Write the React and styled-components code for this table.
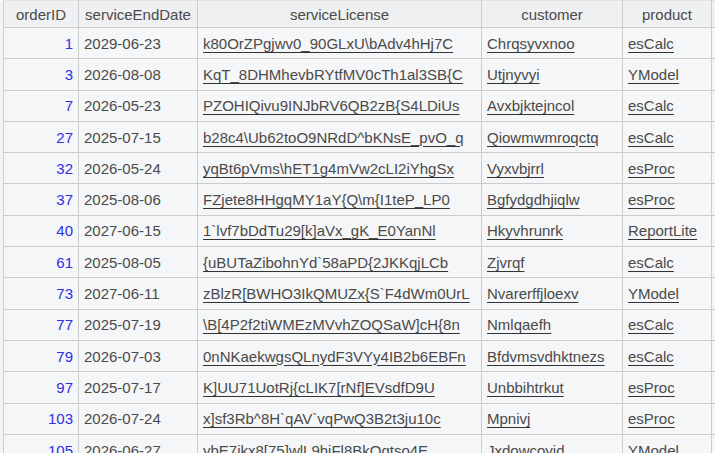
import React from 'react';
import styled, { createGlobalStyle } from 'styled-components';

const GlobalStyle = createGlobalStyle`
    html, body {
        margin: 0;
        padding: 0;
        background-color: #f3f4f5;
        overflow: hidden;
    }
`;

const Page = styled.div`
    width: 715px;
    height: 453px;
    padding-left: 3px;
    box-sizing: border-box;
    overflow: hidden;
    font-family: "Liberation Sans", Arial, sans-serif;
    font-size: 15px;
    color: #4a4a4a;
`;

const Table = styled.table`
    border-collapse: collapse;
    table-layout: fixed;
    width: 760px;
`;

const HeadCell = styled.th`
    height: 26px;
    padding: 0 5px;
    font-weight: normal;
    text-align: center;
    background-color: #eef0f1;
    border: 1px solid #c9cdd0;
    border-top: 1px solid #dfe2e4;
    white-space: nowrap;
    overflow: hidden;
`;

const Cell = styled.td`
    height: 30.3px;
    padding: 0 5px;
    background-color: #f5f6f7;
    border: 1px solid #c9cdd0;
    white-space: nowrap;
    overflow: hidden;
    text-align: ${props => props.align || 'left'};
    color: ${props => props.blue ? '#2f2fe6' : '#4a4a4a'};
`;

const Link = styled.span`
    text-decoration: underline;
    text-decoration-color: #333;
    text-underline-offset: 3px;
`;

const columns = [
    { key: 'orderID', width: 75 },
    { key: 'serviceEndDate', width: 119 },
    { key: 'serviceLicense', width: 284 },
    { key: 'customer', width: 141 },
    { key: 'product', width: 89 },
    { key: '', width: 52 }
];

const rows = [
    [1, '2029-06-23', 'k80OrZPgjwv0_90GLxU\\bAdv4hHj7C', 'Chrqsyvxnoo', 'esCalc'],
    [3, '2026-08-08', 'KqT_8DHMhevbRYtfMV0cTh1al3SB{C', 'Utjnyvyi', 'YModel'],
    [7, '2026-05-23', 'PZOHIQivu9INJbRV6QB2zB{S4LDiUs', 'Avxbjktejncol', 'esCalc'],
    [27, '2025-07-15', 'b28c4\\Ub62toO9NRdD^bKNsE_pvO_q', 'Qiowmwmroqctq', 'esCalc'],
    [32, '2026-05-24', 'yqBt6pVms\\hET1g4mVw2cLI2iYhgSx', 'Vyxvbjrrl', 'esProc'],
    [37, '2025-08-06', 'FZjete8HHgqMY1aY{Q\\m{I1teP_LP0', 'Bgfydgdhjiqlw', 'esProc'],
    [40, '2027-06-15', '1`lvf7bDdTu29[k]aVx_gK_E0YanNl', 'Hkyvhrunrk', 'ReportLite'],
    [61, '2025-08-05', '{uBUTaZibohnYd`58aPD{2JKKqjLCb', 'Zjvrqf', 'esCalc'],
    [73, '2027-06-11', 'zBlzR[BWHO3IkQMUZx{S`F4dWm0UrL', 'Nvarerffjloexv', 'YModel'],
    [77, '2025-07-19', '\\B[4P2f2tiWMEzMVvhZOQSaW]cH{8n', 'Nmlqaefh', 'esCalc'],
    [79, '2026-07-03', '0nNKaekwgsQLnydF3VYy4IB2b6EBFn', 'Bfdvmsvdhktnezs', 'esCalc'],
    [97, '2025-07-17', 'K]UU71UotRj{cLIK7[rNf]EVsdfD9U', 'Unbbihtrkut', 'esProc'],
    [103, '2026-07-24', 'x]sf3Rb^8H`qAV`vqPwQ3B2t3ju10c', 'Mpnivj', 'esProc'],
    [105, '2026-06-27', 'ybE7jkx8[75]wlL9hjFl8BkQgtso4E', 'Jxdowcoyid', 'YModel']
];

const App = () => (
    <Page>
        <GlobalStyle />
        <Table>
            <colgroup>
                {columns.map((col, i) => <col key={i} style={{ width: col.width }} />)}
            </colgroup>
            <thead>
                <tr>
                    {columns.map((col, i) => <HeadCell key={i}>{col.key}</HeadCell>)}
                </tr>
            </thead>
            <tbody>
                {rows.map(([id, date, license, customer, product]) => (
                    <tr key={id}>
                        <Cell align="right" blue>{id}</Cell>
                        <Cell>{date}</Cell>
                        <Cell><Link>{license}</Link></Cell>
                        <Cell><Link>{customer}</Link></Cell>
                        <Cell><Link>{product}</Link></Cell>
                        <Cell />
                    </tr>
                ))}
            </tbody>
        </Table>
    </Page>
);

export default App;
